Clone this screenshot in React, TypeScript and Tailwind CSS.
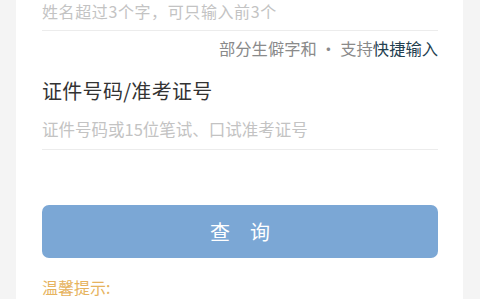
import React from "react";

export default function App() {
  return (
    <div
      className="w-[480px] h-[299px] overflow-hidden bg-[#f4f4f4] pl-4 pr-[17px]"
      style={{ fontFamily: '"Noto Sans CJK SC", "Noto Sans", sans-serif' }}
    >
      <div className="h-full bg-white pl-[26px] pr-[25px] flex flex-col">
        <div className="h-[31px] shrink-0 border-b border-[#ececec] flex items-center pb-[8px]">
          <span className="text-[16px] text-[#c3c3c3] leading-none tracking-[0.6px]">
            姓名超过3个字，可只输入前3个
          </span>
        </div>
        <div className="h-[34px] shrink-0 flex items-center justify-end">
          <span className="text-[16.3px] leading-none text-[#8a8a8a]">
            部分生僻字和 · 支持<span className="text-[#23404f]">快捷输入</span>
          </span>
        </div>
        <div className="h-[52px] shrink-0 flex items-center">
          <span className="text-[20px] leading-none text-[#333333] tracking-[0.3px]">证件号码/准考证号</span>
        </div>
        <div className="h-[33px] shrink-0 border-b border-[#ececec] flex items-center pb-[7px]">
          <span className="text-[16.5px] leading-none text-[#c3c3c3]">
            证件号码或15位笔试、口试准考证号
          </span>
        </div>
        <div className="h-[55px] shrink-0" />
        <div className="h-[53px] shrink-0 rounded-[7px] bg-[#7ba7d5] flex items-center justify-center">
          <span className="text-[20px] text-white leading-none tracking-[20px] pl-[20px]">查询</span>
        </div>
        <div className="h-[21px] shrink-0" />
        <div className="shrink-0 text-[16px] leading-none text-[#e6b35e]">温馨提示:</div>
      </div>
    </div>
  );
}
